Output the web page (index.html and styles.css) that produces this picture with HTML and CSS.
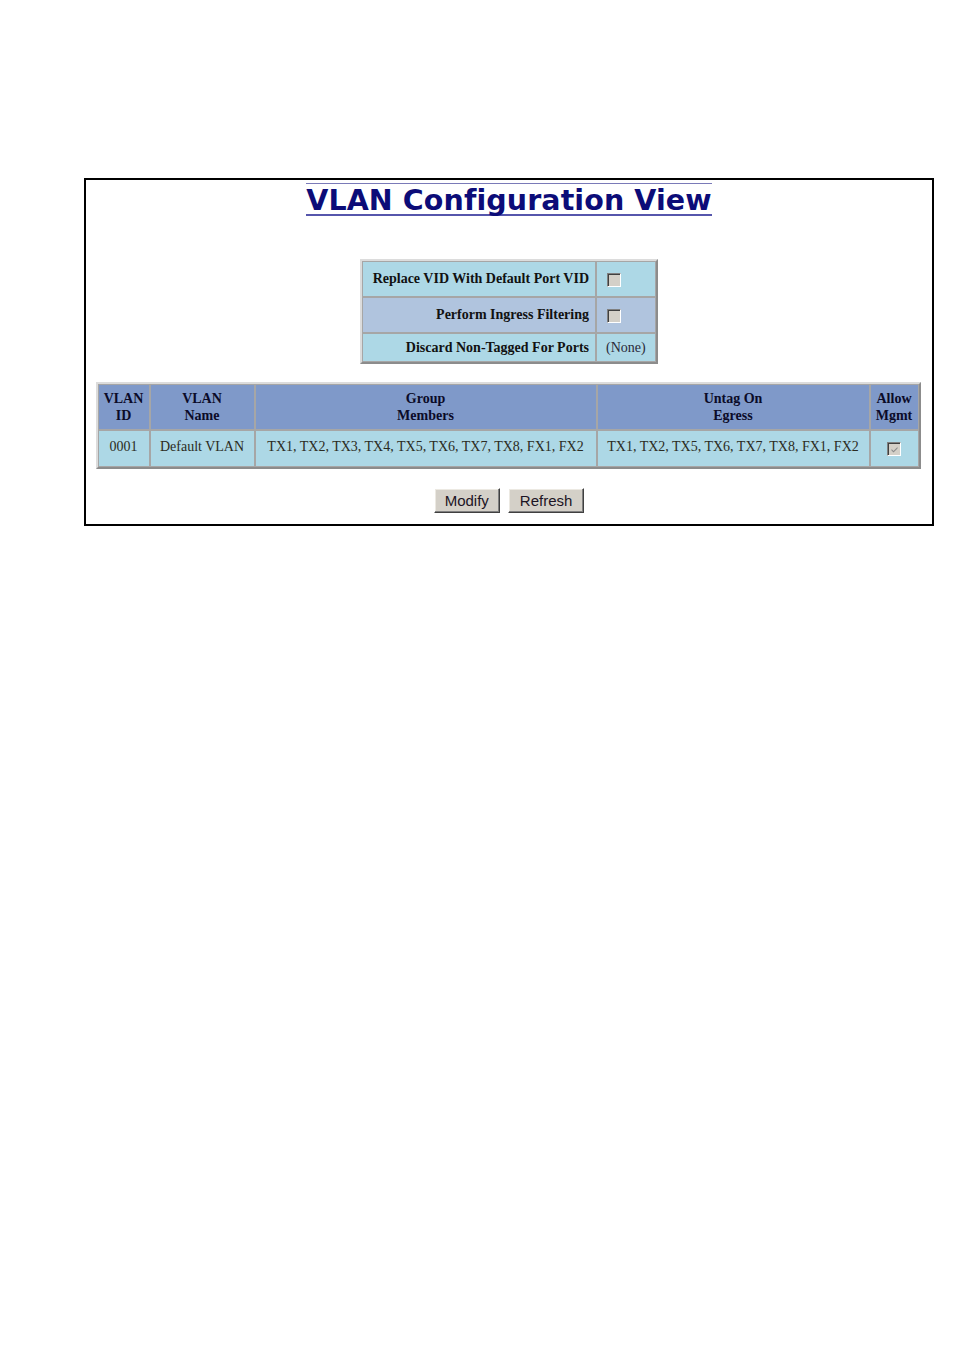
FILE: index.html
```html
<!DOCTYPE html>
<html>
<head>
<meta charset="utf-8">
<title>VLAN Configuration View</title>
<link rel="stylesheet" href="styles.css">
</head>
<body>
<div class="frame">
  <div class="title-row"><span class="title">VLAN Configuration View</span></div>

  <table class="opts">
    <colgroup><col class="opt-label-col"><col class="opt-val-col"></colgroup>
    <tr class="row-a tall">
      <td class="opt-label">Replace VID With Default Port VID</td>
      <td class="opt-val"><span class="cb"></span></td>
    </tr>
    <tr class="row-b tall">
      <td class="opt-label">Perform Ingress Filtering</td>
      <td class="opt-val"><span class="cb"></span></td>
    </tr>
    <tr class="row-a short">
      <td class="opt-label">Discard Non-Tagged For Ports</td>
      <td class="opt-val val-text">(None)</td>
    </tr>
  </table>

  <table class="vlans">
    <colgroup>
      <col class="c-id"><col class="c-name"><col class="c-group"><col class="c-untag"><col class="c-mgmt">
    </colgroup>
    <tr class="head">
      <th>VLAN<br>ID</th>
      <th>VLAN<br>Name</th>
      <th>Group<br>Members</th>
      <th>Untag On<br>Egress</th>
      <th>Allow<br>Mgmt</th>
    </tr>
    <tr class="data">
      <td>0001</td>
      <td>Default VLAN</td>
      <td>TX1, TX2, TX3, TX4, TX5, TX6, TX7, TX8, FX1, FX2</td>
      <td>TX1, TX2, TX5, TX6, TX7, TX8, FX1, FX2</td>
      <td><span class="cb checked"><svg viewBox="0 0 9 9" width="9" height="9"><path d="M1.5 4 L3.5 6 L7.5 2 L7.5 3.5 L3.5 7.5 L1.5 5.5 Z" fill="#8a8a8a"/></svg></span></td>
    </tr>
  </table>

  <div class="buttons">
    <button class="btn" type="button">Modify</button>
    <button class="btn" type="button">Refresh</button>
  </div>
</div>
</body>
</html>
```

FILE: styles.css
```css
html, body {
  margin: 0;
  padding: 0;
  background: #ffffff;
}

body {
  font-family: "Liberation Serif", "Times New Roman", serif;
  padding: 178px 0 0 84px;
}

.frame {
  box-sizing: border-box;
  width: 850px;
  border: 2px solid #000000;
  padding: 3px 0 11px;
}

.title-row {
  text-align: center;
}

.title {
  display: inline-block;
  font-family: "DejaVu Sans", Verdana, sans-serif;
  font-weight: bold;
  font-size: 28.5px;
  line-height: 30px;
  padding-top: 2px;
  height: 28px;
  overflow: visible;
  color: #0c0c78;
  border-top: 1px solid #7a7ab8;
  border-bottom: 2px solid #5656ac;
  letter-spacing: 0.1px;
}

table {
  border-collapse: separate;
  border-spacing: 0;
  table-layout: fixed;
  border-style: solid;
  border-width: 2px;
  border-color: #dcdcdc #8c8c8c #8c8c8c #dcdcdc;
}

td, th {
  border: 1px solid #a6a6a6;
  padding: 0;
  font-size: 14px;
}

/* options table */
.opts {
  margin: 43px auto 0;
  width: 298px;
}

.opt-label-col { width: 234px; }
.opt-val-col { width: 60px; }

.row-a td { background: #add8e6; }
.row-b td { background: #b0c4de; }

.tall td { height: 34px; }
.short td { height: 27px; }

.opt-label {
  text-align: right;
  font-weight: bold;
  color: #111111;
  padding-right: 6px;
}

.opt-val {
  padding-left: 10px;
  vertical-align: middle;
}

.val-text {
  color: #2a2a3a;
  padding-left: 9px;
}

.cb {
  display: inline-block;
  box-sizing: border-box;
  width: 14px;
  height: 14px;
  vertical-align: middle;
  background: #d4d0c8;
  border: 1px solid;
  border-color: #808080 #ffffff #ffffff #808080;
  box-shadow: inset 1px 1px 0 #404040, inset -1px -1px 0 #d4d0c8;
  position: relative;
}

.cb svg {
  position: absolute;
  left: 2px;
  top: 2px;
}

/* vlan table */
.vlans {
  margin: 18px auto 0;
  width: 825px;
  position: relative;
  left: -1px;
}

.c-id { width: 52px; }
.c-name { width: 105px; }
.c-group { width: 342px; }
.c-untag { width: 273px; }
.c-mgmt { width: 49px; }

.head th {
  background: #7f99c9;
  color: #0b0b28;
  font-weight: bold;
  line-height: 17px;
  height: 44px;
  text-align: center;
  vertical-align: middle;
}

.data td {
  background: #add8e6;
  color: #2b2b22;
  text-align: center;
  height: 32px;
  vertical-align: middle;
  padding-bottom: 3px;
  box-sizing: content-box;
}

.data td .cb {
  margin-top: 3px;
}

/* buttons */
.buttons {
  margin-top: 19px;
  display: flex;
  justify-content: center;
  gap: 8px;
}

.btn {
  font-family: "Liberation Sans", Arial, sans-serif;
  font-size: 15px;
  color: #1c1424;
  height: 25px;
  padding: 0 10px;
  background: #d4d0c8;
  border: 1px solid;
  border-color: #ffffff #404040 #404040 #ffffff;
  box-shadow: inset -1px -1px 0 #808080, inset 1px 1px 0 #ece9e2;
  border-radius: 0;
  margin: 0;
}

.btn + .btn {
  padding: 0 11px;
}
```
